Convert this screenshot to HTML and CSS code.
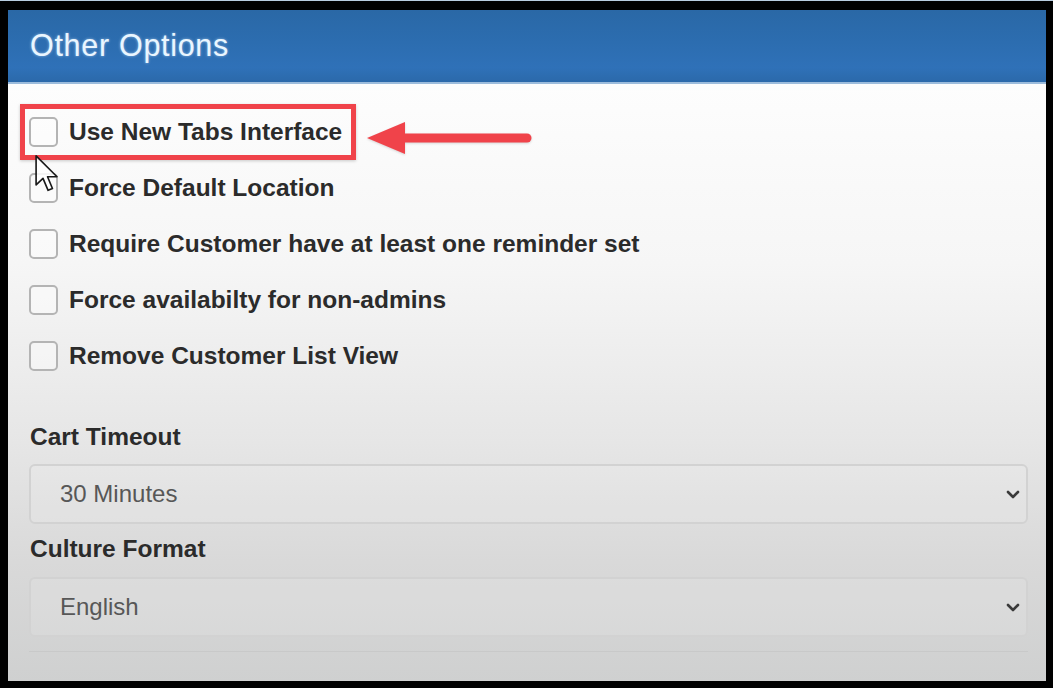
FILE: index.html
```html
<!DOCTYPE html>
<html lang="en">
<head>
    <meta charset="UTF-8">
    <meta name="viewport" content="width=device-width, initial-scale=1.0">
    <title>Other Options</title>
    <link rel="stylesheet" href="styles.css">
</head>
<body>
    <div class="frame">
        <div class="panel">
            <div class="panel-head">
                <h2 class="panel-title">Other Options</h2>
            </div>

            <div class="panel-body">
                <ul class="options">
                    <li class="option"><span class="box"></span><span class="option-text">Use New Tabs Interface</span></li>
                    <li class="option"><span class="box"></span><span class="option-text">Force Default Location</span></li>
                    <li class="option"><span class="box"></span><span class="option-text">Require Customer have at least one reminder set</span></li>
                    <li class="option"><span class="box"></span><span class="option-text">Force availabilty for non-admins</span></li>
                    <li class="option"><span class="box"></span><span class="option-text">Remove Customer List View</span></li>
                </ul>

                <div class="field">
                    <label class="field-label">Cart Timeout</label>
                    <div class="select">
                        <span>30 Minutes</span>
                        <svg class="chevron" viewBox="0 0 14 9" width="14" height="9"><path d="M2 2 L7 7 L12 2" fill="none" stroke="#3a3a3a" stroke-width="2.6" stroke-linecap="round" stroke-linejoin="round"/></svg>
                    </div>
                </div>

                <div class="field">
                    <label class="field-label">Culture Format</label>
                    <div class="select">
                        <span>English</span>
                        <svg class="chevron" viewBox="0 0 14 9" width="14" height="9"><path d="M2 2 L7 7 L12 2" fill="none" stroke="#3a3a3a" stroke-width="2.6" stroke-linecap="round" stroke-linejoin="round"/></svg>
                    </div>
                </div>

                <div class="bottom-line"></div>

                <!-- пометки поверх скриншота -->
                <div class="highlight"></div>
                <svg class="arrow" viewBox="0 0 170 34" width="170" height="34">
                    <path d="M37 17 L160 17" stroke="#f0434a" stroke-width="9" stroke-linecap="round"/>
                    <path d="M0 17 L38 1 L38 33 Z" fill="#f0434a"/>
                </svg>
                <svg class="cursor" viewBox="0 0 14 22" width="26" height="40">
                    <path d="M1 1 L1 17 L4.8 13.4 L7.6 20 L10 19 L7.3 12.5 L12.5 12.5 Z" fill="#fff" fill-opacity="0.85" stroke="#1a1a1a" stroke-width="0.9" stroke-linejoin="round"/>
                </svg>
            </div>
        </div>
    </div>
</body>
</html>
```

FILE: styles.css
```css
/* Общий стиль */
* {
    box-sizing: border-box;
}

body {
    margin: 0;
    background: #000;
    font-family: 'Liberation Sans', Arial, sans-serif;
    overflow: hidden;
}

/* Чёрная рамка вокруг панели */
.frame {
    width: 1053px;
    height: 688px;
    padding: 9px 7px 7px 8px;
    border-top: 1px solid #b9cde0;
    background: #000;
}

.panel {
    height: 100%;
    display: flex;
    flex-direction: column;
}

/* Заголовок */
.panel-head {
    height: 74px;
    flex-shrink: 0;
    display: flex;
    align-items: center;
    padding-left: 22px;
    background: linear-gradient(180deg, #2a68a6 0%, #2c6db0 45%, #2f71b8 80%, #2b69aa 100%);
    border-bottom: 2px solid #9cbcdc;
}

.panel-title {
    margin: 0;
    padding-bottom: 2px;
    font-weight: normal;
    font-size: 30.5px;
    letter-spacing: 0.7px;
    color: #eaf6ff;
    text-shadow: 0 0 3px rgba(210, 235, 255, 0.6);
}

/* Содержимое */
.panel-body {
    position: relative;
    flex: 1;
    padding: 20px 18px 0 21px;
    background: linear-gradient(180deg, #fdfdfd 0%, #f6f6f6 30%, #e6e6e6 60%, #d9d9d9 80%, #cfd0d0 100%);
}

.options {
    list-style: none;
    margin: 0;
    padding: 0;
}

.option {
    height: 56px;
    display: flex;
    align-items: center;
}

.box {
    width: 29px;
    height: 30px;
    border: 2px solid #b4b4b4;
    border-radius: 5px;
    background: rgba(255, 255, 255, 0.4);
    margin-right: 11px;
}

.option-text {
    font-weight: bold;
    font-size: 24.5px;
    color: #2b2b2b;
}

/* Поля выбора */
.options + .field {
    margin-top: 38px;
}

.field-label {
    display: block;
    height: 30px;
    line-height: 30px;
    margin-bottom: 12px;
    padding-left: 1px;
    font-weight: bold;
    font-size: 24.5px;
    color: #2b2b2b;
}

.select {
    height: 60px;
    margin-bottom: 10px;
    display: flex;
    align-items: center;
    justify-content: space-between;
    padding: 0 6px 0 29px;
    border: 2px solid #d2d2d2;
    border-radius: 6px;
    background: rgba(255, 255, 255, 0.12);
    font-size: 24px;
    color: #575757;
}

.field + .field .field-label {
    margin-bottom: 13px;
}

.bottom-line {
    margin-top: 14px;
    height: 1px;
    background: rgba(0, 0, 0, 0.04);
}

/* Красная рамка и стрелка */
.highlight {
    position: absolute;
    left: 12px;
    top: 20px;
    width: 336px;
    height: 56px;
    border: 5px solid #f0434a;
    box-shadow: 0 1px 3px rgba(0, 0, 0, 0.2);
}

.arrow {
    position: absolute;
    left: 359px;
    top: 37px;
    filter: drop-shadow(0 1px 1px rgba(0, 0, 0, 0.15));
}

.cursor {
    position: absolute;
    left: 26px;
    top: 70px;
}
```
